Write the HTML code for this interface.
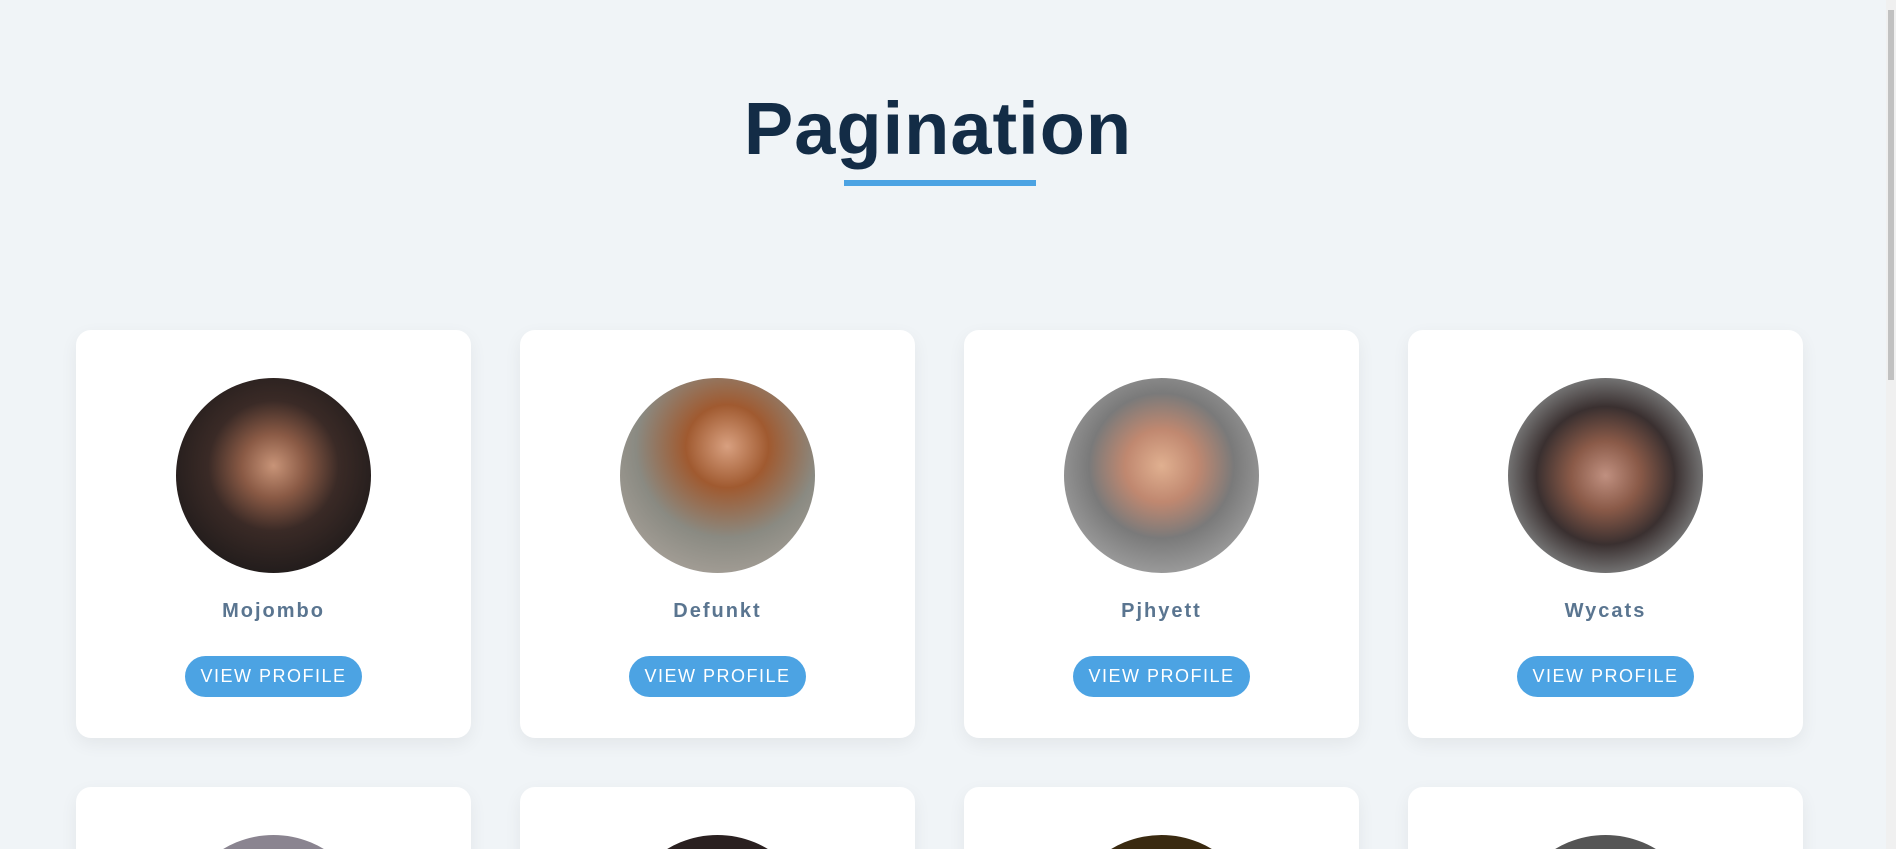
<!DOCTYPE html>
<html><head><meta charset="utf-8"><style>
html,body{margin:0;padding:0;width:1896px;height:849px;overflow:hidden}
body{background:#f0f4f7;font-family:"Liberation Sans",sans-serif}
#w{position:relative;width:1896px;height:849px;overflow:hidden}
h1{position:absolute;left:0;width:1876px;top:84px;margin:0;text-align:center;font-size:74px;font-weight:bold;color:#132c46;letter-spacing:1px;line-height:90px}
.ul{position:absolute;left:844px;top:180px;width:192px;height:6px;background:#4ca3e3}
.card{position:absolute;width:395px;height:408px;background:#fff;border-radius:15px;box-shadow:0 6px 18px rgba(0,0,0,0.06)}
.av{position:absolute;left:100px;top:48px;width:195px;height:195px;border-radius:50%}
.nm{position:absolute;left:0;width:395px;top:270px;text-align:center;font-size:20px;font-weight:bold;color:#5a7590;letter-spacing:2px}
.bt{position:absolute;left:109px;top:326px;width:177px;height:41px;border-radius:21px;background:#4ca3e3;color:#fff;font-size:18px;letter-spacing:1.5px;text-align:center;line-height:41px}
.sb{position:absolute;right:0;top:0;width:10px;height:849px;background:#f0f0f0}
.sb div{position:absolute;left:2px;top:10px;width:6px;height:370px;background:#c1c1c1}
</style></head><body><div id="w">
<h1>Pagination</h1><div class="ul"></div>
<div class="card" style="left:76px;top:330px"><div class="av" style="background:radial-gradient(circle at 50% 45%,#c89478 0,#8a5a45 22%,#3a2a26 45%,#1e1a1a 80%)"></div><div class="nm">Mojombo</div><div class="bt">VIEW PROFILE</div></div>
<div class="card" style="left:520px;top:330px"><div class="av" style="background:radial-gradient(circle at 55% 35%,#d8a080 0,#a05a30 25%,#8a8a82 55%,#a9a29a 85%)"></div><div class="nm">Defunkt</div><div class="bt">VIEW PROFILE</div></div>
<div class="card" style="left:964px;top:330px"><div class="av" style="background:radial-gradient(circle at 50% 45%,#e0b090 0,#c08870 25%,#7a7a7a 50%,#a8a8a8 85%)"></div><div class="nm">Pjhyett</div><div class="bt">VIEW PROFILE</div></div>
<div class="card" style="left:1408px;top:330px"><div class="av" style="background:radial-gradient(circle at 50% 50%,#c09080 0,#8a5a48 25%,#3a3030 50%,#9aa0a0 85%)"></div><div class="nm">Wycats</div><div class="bt">VIEW PROFILE</div></div>
<div class="card" style="left:76px;top:787px"><div class="av" style="background:#8a8490"></div></div>
<div class="card" style="left:520px;top:787px"><div class="av" style="background:#2a2020"></div></div>
<div class="card" style="left:964px;top:787px"><div class="av" style="background:#3a2a10"></div></div>
<div class="card" style="left:1408px;top:787px"><div class="av" style="background:#555"></div></div>
<div class="sb"><div></div></div>
</div></body></html>
